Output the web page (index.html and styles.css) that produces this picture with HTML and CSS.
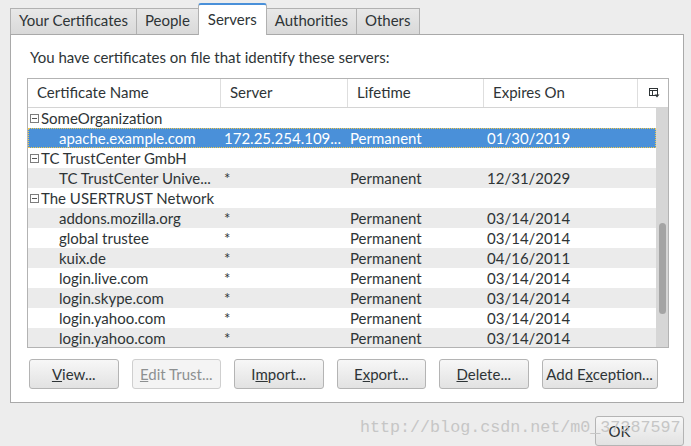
FILE: index.html
```html
<!DOCTYPE html>
<html>
<head>
<meta charset="utf-8">
<link rel="stylesheet" href="styles.css">
</head>
<body>
<div class="window">
  <div class="tabs">
    <div class="tab">Your Certificates</div>
    <div class="tab">People</div>
    <div class="tab selected">Servers</div>
    <div class="tab">Authorities</div>
    <div class="tab">Others</div>
  </div>
  <div class="panel">
    <p class="intro">You have certificates on file that identify these servers:</p>
    <div class="tree">
      <div class="head">
        <div class="th">Certificate Name</div>
        <div class="th">Server</div>
        <div class="th">Lifetime</div>
        <div class="th">Expires On</div>
        <div class="th picker">
          <svg width="11" height="10" viewBox="0 0 11 10">
            <rect x="0.5" y="0.5" width="8" height="7" fill="none" stroke="#2e3436"/>
            <line x1="0" y1="2.5" x2="9" y2="2.5" stroke="#2e3436"/>
            <line x1="3.5" y1="2" x2="3.5" y2="8" stroke="#2e3436"/>
            <path d="M5.5 6.5h5l-2.5 3z" fill="#2e3436"/>
          </svg>
        </div>
      </div>
      <div class="body">
        <div class="rows">
          <div class="row group"><span class="twisty"></span>SomeOrganization</div>
          <div class="row sel"><span class="c name">apache.example.com</span><span class="c">172.25.254.109...</span><span class="c life">Permanent</span><span class="c">01/30/2019</span></div>
          <div class="row group"><span class="twisty"></span>TC TrustCenter GmbH</div>
          <div class="row alt"><span class="c name">TC TrustCenter Unive...</span><span class="c">*</span><span class="c life">Permanent</span><span class="c">12/31/2029</span></div>
          <div class="row group"><span class="twisty"></span>The USERTRUST Network</div>
          <div class="row alt"><span class="c name">addons.mozilla.org</span><span class="c">*</span><span class="c life">Permanent</span><span class="c">03/14/2014</span></div>
          <div class="row"><span class="c name">global trustee</span><span class="c">*</span><span class="c life">Permanent</span><span class="c">03/14/2014</span></div>
          <div class="row alt"><span class="c name">kuix.de</span><span class="c">*</span><span class="c life">Permanent</span><span class="c">04/16/2011</span></div>
          <div class="row"><span class="c name">login.live.com</span><span class="c">*</span><span class="c life">Permanent</span><span class="c">03/14/2014</span></div>
          <div class="row alt"><span class="c name">login.skype.com</span><span class="c">*</span><span class="c life">Permanent</span><span class="c">03/14/2014</span></div>
          <div class="row"><span class="c name">login.yahoo.com</span><span class="c">*</span><span class="c life">Permanent</span><span class="c">03/14/2014</span></div>
          <div class="row alt"><span class="c name">login.yahoo.com</span><span class="c">*</span><span class="c life">Permanent</span><span class="c">03/14/2014</span></div>
        </div>
        <div class="scrollbar"><div class="thumb"></div></div>
      </div>
    </div>
    <div class="buttons">
      <button class="btn"><u>V</u>iew...</button>
      <button class="btn disabled"><u>E</u>dit Trust...</button>
      <button class="btn">I<u>m</u>port...</button>
      <button class="btn">E<u>x</u>port...</button>
      <button class="btn"><u>D</u>elete...</button>
      <button class="btn wide">Add E<u>x</u>ception...</button>
    </div>
  </div>
  <div class="footer">
    <button class="btn ok">OK</button>
  </div>
  <div class="watermark">http://blog.csdn.net/m0_37387597</div>
</div>
</body>
</html>
```

FILE: styles.css
```css
body {
  margin: 0;
  background: #ededed;
  font-family: Lato, "DejaVu Sans", sans-serif;
  font-size: 15px;
  color: #2e3436;
}

.window {
  position: relative;
  width: 691px;
  height: 446px;
  overflow: hidden;
}

.tabs {
  display: flex;
  align-items: flex-end;
  height: 34px;
  padding-left: 10px;
  box-sizing: border-box;
}

.tab {
  height: 26px;
  line-height: 22px;
  padding: 0 8px;
  border: 1px solid #b1b1b1;
  border-bottom: none;
  margin-right: -1px;
  background: linear-gradient(#e8e8e8, #d9d9d9);
  box-sizing: border-box;
  white-space: nowrap;
}

.tab.selected {
  height: 32px;
  line-height: 28px;
  padding: 0 9px;
  margin-bottom: -1px;
  background: #fff;
  border-top: 2px solid #4a90d9;
  border-radius: 3px 3px 0 0;
  position: relative;
  z-index: 1;
}

.panel {
  margin-left: 10px;
  width: 674px;
  height: 369px;
  box-sizing: border-box;
  border: 1px solid #a9a9a9;
  background: #fff;
  padding: 12px 14px 0 16px;
}

.intro {
  margin: 0 0 11px 3px;
  line-height: 20px;
}

.tree {
  border: 1px solid #b3b3b3;
  height: 270px;
  box-sizing: border-box;
  display: flex;
  flex-direction: column;
}

.head {
  display: grid;
  grid-template-columns: 192px 127px 136px 154px 1fr;
  height: 29px;
  flex: none;
  border-bottom: 1px solid #d4d4d4;
  box-sizing: border-box;
}

.th {
  padding-left: 9px;
  line-height: 27px;
  white-space: nowrap;
}

.th + .th {
  border-left: 1px solid #dedede;
}

.th.picker {
  padding: 0;
  display: flex;
  align-items: center;
  justify-content: center;
}

.th.picker svg {
  display: block;
  margin-left: 2px;
}

.body {
  display: flex;
  flex: 1;
  overflow: hidden;
}

.rows {
  flex: 1;
  overflow: hidden;
}

.row {
  display: grid;
  grid-template-columns: 192px 127px 136px 1fr;
  height: 20px;
  line-height: 20px;
  white-space: nowrap;
}

.row.alt {
  background: #ebebeb;
}

.row.sel {
  background: #4a90d9;
  color: #fff;
  outline: 1px dotted #f2c94c;
  outline-offset: -1px;
}

.c {
  padding-left: 4px;
  overflow: hidden;
  text-overflow: ellipsis;
}

.c.name {
  padding-left: 31px;
}

.c.life {
  padding-left: 3px;
}

.row.group {
  display: flex;
  align-items: center;
  padding-left: 2px;
}

.twisty {
  width: 9px;
  height: 9px;
  box-sizing: border-box;
  border: 1px solid #7d7d7d;
  margin-right: 2px;
  display: flex;
  align-items: center;
  justify-content: center;
}

.twisty::before {
  content: "";
  width: 5px;
  height: 1px;
  background: #555;
}

.scrollbar {
  width: 12px;
  background: #d6d6d6;
  padding: 115px 2px 0 3px;
  box-sizing: border-box;
}

.thumb {
  height: 91px;
  border-radius: 4px;
  background: #a4a4a4;
}

.buttons {
  display: flex;
  gap: 13px;
  margin-top: 11px;
  padding-left: 2px;
}

.btn {
  width: 89.5px;
  height: 30px;
  padding: 0;
  border: 1px solid #b4b4b4;
  border-radius: 3px;
  background: linear-gradient(#f7f7f7, #e2e2e2);
  font: inherit;
  color: inherit;
  box-sizing: border-box;
}

.btn.wide {
  width: 116px;
}

.btn.disabled {
  background: #f4f4f4;
  border-color: #cfcfcf;
  color: #8d9091;
}

.btn.ok {
  text-align: left;
  padding-left: 13px;
}

.footer {
  display: flex;
  justify-content: flex-end;
  padding: 13px 7px 0 0;
}

.watermark {
  position: absolute;
  left: 360px;
  top: 418px;
  font-family: "Liberation Mono", monospace;
  font-size: 16.7px;
  line-height: 20px;
  color: #c6c6c6;
  white-space: nowrap;
}
```
